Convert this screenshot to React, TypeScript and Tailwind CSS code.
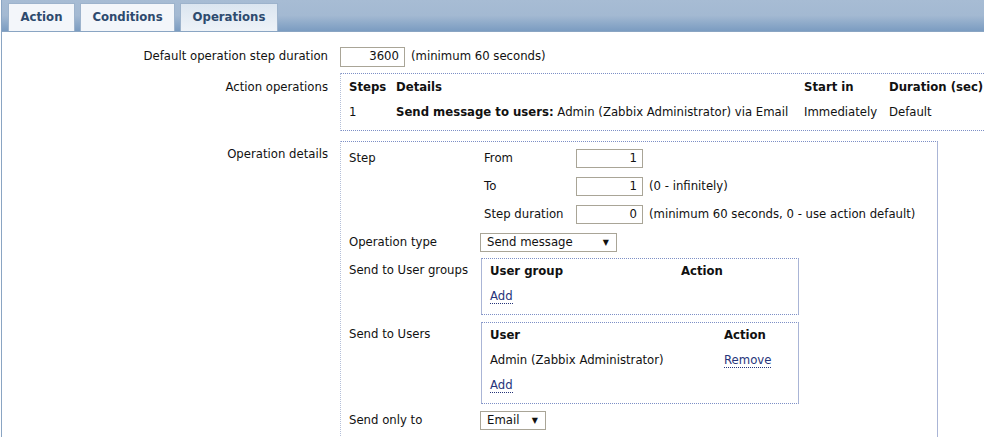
import React from "react";

const font = "font-['DejaVu_Sans','Verdana',sans-serif]";

function NumInput({ value, w }: { value: string; w: string }) {
  return (
    <div
      className={`${w} h-[19px] border border-[#a9a597] bg-white flex items-center justify-end pr-[5px] leading-none`}
    >
      {value}
    </div>
  );
}

function Select({ value, w }: { value: string; w: string }) {
  return (
    <div
      className={`${w} h-[19px] border border-[#a9a597] bg-white flex items-center justify-between pl-[6px] pr-[7px] leading-none`}
    >
      <span>{value}</span>
      <span className="text-[8px]">▼</span>
    </div>
  );
}

function Link({ children }: { children: React.ReactNode }) {
  return (
    <span className="text-[#27357a] border-b border-dotted border-[#27357a] leading-[13px]">
      {children}
    </span>
  );
}

function Tab({ label, w, active }: { label: string; w: string; active?: boolean }) {
  return (
    <div
      className={`${w} h-[28px] flex items-center justify-center border border-b-0 border-[#9db3cc] font-bold text-[#2d4a6e] ${
        active ? "bg-gradient-to-b from-[#dbe5f0] to-[#eef3f8]" : "bg-[#f3f6fa]"
      }`}
    >
      {label}
    </div>
  );
}

export default function App() {
  return (
    <div
      className={`${font} text-[11.7px] text-[#111] bg-white h-[437px] w-[984px] overflow-hidden ml-px border-l border-[#8aa5c3]`}
    >
      {/* Tabs */}
      <div className="h-[32px] flex items-end gap-[5px] pl-[6px] bg-gradient-to-b from-[#a7bcd4] via-[#a3b9d2] to-[#7b9cc1] border-b border-[#8aa5c3]">
        <Tab label="Action" w="w-[67px]" />
        <Tab label="Conditions" w="w-[95px]" />
        <Tab label="Operations" w="w-[98px]" active />
      </div>

      <div className="pt-[15px]">
        {/* Default step duration */}
        <div className="flex items-center">
          <div className="w-[326px] shrink-0 text-right">Default operation step duration</div>
          <div className="ml-[12px] flex items-center gap-[6px]">
            <NumInput value="3600" w="w-[65px] h-[20px]" />
            <span>(minimum 60 seconds)</span>
          </div>
        </div>

        {/* Action operations */}
        <div className="flex mt-[6px]">
          <div className="w-[326px] shrink-0 text-right pt-[6px]">Action operations</div>
          <div className="ml-[12px] w-[700px] shrink-0 border border-r-0 border-dotted border-[#7d8fc6] [border-left-color:#b4bfd8] pl-[8px] pt-[1px] pb-[5px]">
            <div className="grid grid-cols-[47px_408px_85px_150px] h-[25px] items-center font-bold">
              <span>Steps</span>
              <span>Details</span>
              <span>Start in</span>
              <span>Duration (sec)</span>
            </div>
            <div className="grid grid-cols-[47px_408px_85px_150px] h-[25px] items-center">
              <span>1</span>
              <span className="whitespace-nowrap">
                <b>Send message to users:</b> Admin (Zabbix Administrator) via Email
              </span>
              <span>Immediately</span>
              <span>Default</span>
            </div>
          </div>
        </div>

        {/* Operation details */}
        <div className="flex mt-[10px]">
          <div className="w-[326px] shrink-0 text-right pt-[5px]">Operation details</div>
          <div className="ml-[12px] w-[598px] shrink-0 border border-b-0 border-dotted border-[#7d8fc6] [border-left-color:#b4bfd8] [border-right-style:solid] [border-right-color:#aab5d6] pl-[8px] pt-[7px] pb-[10px]">
            {/* Step */}
            <div className="flex">
              <div className="w-[131px] shrink-0 pt-[1px]">Step</div>
              <div className="flex flex-col gap-[9px]">
                <div className="flex items-center">
                  <span className="w-[96px] pl-[4px]">From</span>
                  <NumInput value="1" w="w-[67px]" />
                </div>
                <div className="flex items-center">
                  <span className="w-[96px] pl-[4px]">To</span>
                  <NumInput value="1" w="w-[67px]" />
                  <span className="ml-[6px]">(0 - infinitely)</span>
                </div>
                <div className="flex items-center">
                  <span className="w-[96px] pl-[4px]">Step duration</span>
                  <NumInput value="0" w="w-[67px]" />
                  <span className="ml-[6px] whitespace-nowrap">(minimum 60 seconds, 0 - use action default)</span>
                </div>
              </div>
            </div>

            {/* Operation type */}
            <div className="flex items-center mt-[9px]">
              <div className="w-[131px] shrink-0">Operation type</div>
              <Select value="Send message" w="w-[137px] h-[19px]" />
            </div>

            {/* Send to user groups */}
            <div className="flex mt-[6px]">
              <div className="w-[132px] shrink-0 pt-[4px]">Send to User groups</div>
              <div className="w-[318px] border border-[#aab5d6] [border-top-style:dotted] [border-bottom-style:dotted] [border-top-color:#7d8fc6] [border-bottom-color:#7d8fc6] pl-[8px] pb-[5px]">
                <div className="grid grid-cols-[191px_auto] h-[25px] items-center font-bold">
                  <span>User group</span>
                  <span>Action</span>
                </div>
                <div className="h-[25px] flex items-center">
                  <Link>Add</Link>
                </div>
              </div>
            </div>

            {/* Send to users */}
            <div className="flex mt-[7px]">
              <div className="w-[132px] shrink-0 pt-[4px]">Send to Users</div>
              <div className="w-[318px] border border-[#aab5d6] [border-top-style:dotted] [border-bottom-style:dotted] [border-top-color:#7d8fc6] [border-bottom-color:#7d8fc6] pl-[8px] pb-[5px]">
                <div className="grid grid-cols-[234px_auto] h-[25px] items-center font-bold">
                  <span>User</span>
                  <span>Action</span>
                </div>
                <div className="grid grid-cols-[234px_auto] h-[26px] items-center">
                  <span>Admin (Zabbix Administrator)</span>
                  <span>
                    <Link>Remove</Link>
                  </span>
                </div>
                <div className="h-[24px] flex items-center">
                  <Link>Add</Link>
                </div>
              </div>
            </div>

            {/* Send only to */}
            <div className="flex items-center mt-[7px]">
              <div className="w-[131px] shrink-0">Send only to</div>
              <Select value="Email" w="w-[66px] h-[19px]" />
            </div>
          </div>
        </div>
      </div>
    </div>
  );
}
